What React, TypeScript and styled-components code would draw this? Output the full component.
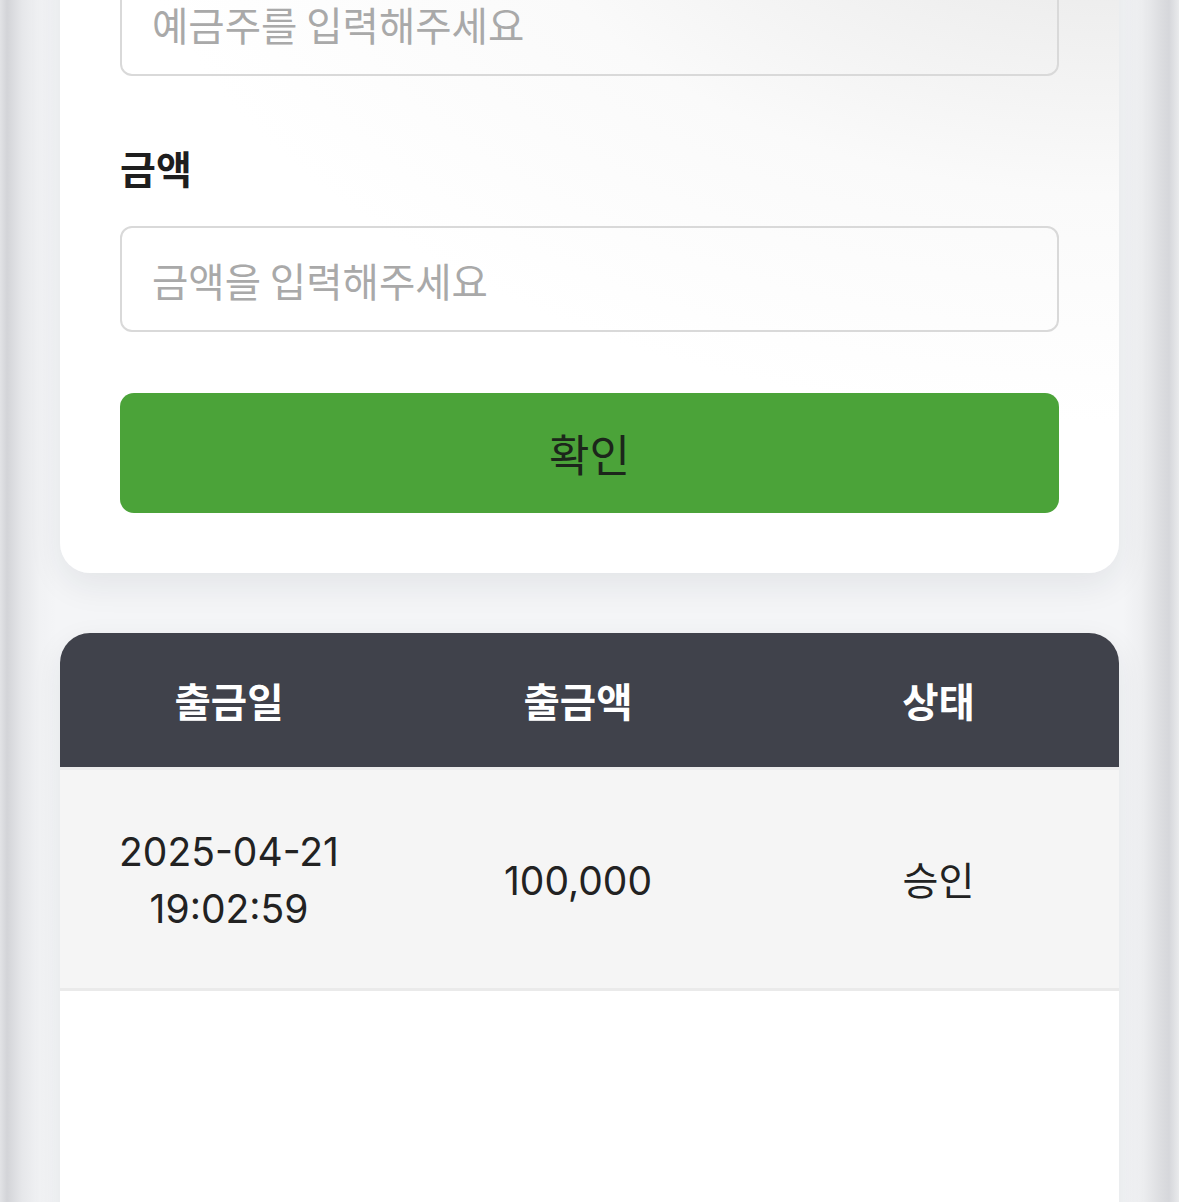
import React from "react";
import styled, { createGlobalStyle } from "styled-components";

const GlobalStyle = createGlobalStyle`
  html, body {
    margin: 0;
    padding: 0;
  }
  body {
    font-family: Inter, "Noto Sans CJK KR", "Noto Sans", sans-serif;
    background: linear-gradient(
      to right,
      #e2e3e6 0px,
      #d3d4d8 7px,
      #e6e7ea 22px,
      #f1f2f4 40px,
      #f4f5f7 56px,
      #f4f5f7 calc(100% - 56px),
      #eeeff1 calc(100% - 38px),
      #dcdde0 calc(100% - 18px),
      #d6d7db calc(100% - 10px),
      #e9eaec 100%
    );
    min-height: 100vh;
    overflow: hidden;
  }
  * { box-sizing: border-box; }
`;

const Page = styled.div`
  display: flex;
  flex-direction: column;
  gap: 60px;
  padding: 0 60px;
`;

const FormCard = styled.section`
  margin-top: -177px;
  padding: 60px;
  border-radius: 30px;
  background: radial-gradient(
    ellipse 95% 80% at 100% 0%,
    #dedede 0%,
    #eeeeee 30%,
    #fafafa 62%,
    #ffffff 100%
  );
  box-shadow: 0 12px 34px rgba(30, 35, 45, 0.08);
  display: flex;
  flex-direction: column;
  gap: 63px;
`;

const Field = styled.div`
  display: flex;
  flex-direction: column;
  gap: 30px;
`;

const Label = styled.label`
  font-family: "Noto Sans CJK KR", sans-serif;
  font-size: 39px;
  line-height: 57px;
  font-weight: 700;
  color: #1e1e1e;
`;

const Input = styled.input`
  height: 106px;
  width: 100%;
  padding: 0 30px;
  border: 2.5px solid #d9d9d9;
  border-radius: 12px;
  background: transparent;
  font-family: "Noto Sans CJK KR", sans-serif;
  font-size: 39.5px;
  color: #222;
  outline: none;
  &::placeholder {
    color: #a9a9a9;
  }
`;

const SubmitButton = styled.button`
  margin-top: -2px;
  height: 120px;
  width: 100%;
  border: none;
  border-radius: 14px;
  background: #4ba339;
  color: #1c261b;
  font-family: "Noto Sans CJK KR", sans-serif;
  font-size: 44px;
  font-weight: 400;
  cursor: pointer;
`;

const TableCard = styled.section`
  border-radius: 30px 30px 0 0;
  overflow: hidden;
  background: #ffffff;
  min-height: 640px;
  box-shadow: 0 10px 30px rgba(30, 35, 45, 0.08);
`;

const Row = styled.div<{ $head?: boolean }>`
  display: grid;
  grid-template-columns: 338fr 360fr 361fr;
  align-items: center;
  background: ${(p) => (p.$head ? "#40424b" : "#f5f5f5")};
  border-top: ${(p) => (p.$head ? "none" : "3px solid #ececec")};
  border-bottom: ${(p) => (p.$head ? "none" : "3px solid #eaeaea")};
  padding: ${(p) => (p.$head ? "38px 0 39px" : "53px 0 51px")};
`;

const Cell = styled.div<{ $head?: boolean }>`
  text-align: center;
  font-size: ${(p) => (p.$head ? "39.5px" : "39px")};
  line-height: 57px;
  font-weight: ${(p) => (p.$head ? 700 : 400)};
  color: ${(p) => (p.$head ? "#ffffff" : "#222222")};
  font-family: ${(p) =>
    p.$head
      ? `"Noto Sans CJK KR", sans-serif`
      : `Inter, "Noto Sans CJK KR", sans-serif`};
`;

const rows = [
  { date: "2025-04-21", time: "19:02:59", amount: "100,000", status: "승인" },
];

export default function App() {
  return (
    <>
      <GlobalStyle />
      <Page>
        <FormCard>
          <Field>
            <Label>예금주</Label>
            <Input placeholder="예금주를 입력해주세요" />
          </Field>
          <Field>
            <Label>금액</Label>
            <Input placeholder="금액을 입력해주세요" />
          </Field>
          <SubmitButton>확인</SubmitButton>
        </FormCard>
        <TableCard>
          <Row $head>
            <Cell $head>출금일</Cell>
            <Cell $head>출금액</Cell>
            <Cell $head>상태</Cell>
          </Row>
          {rows.map((r) => (
            <Row key={r.date + r.time}>
              <Cell>
                {r.date}
                <br />
                {r.time}
              </Cell>
              <Cell>{r.amount}</Cell>
              <Cell>{r.status}</Cell>
            </Row>
          ))}
        </TableCard>
      </Page>
    </>
  );
}
